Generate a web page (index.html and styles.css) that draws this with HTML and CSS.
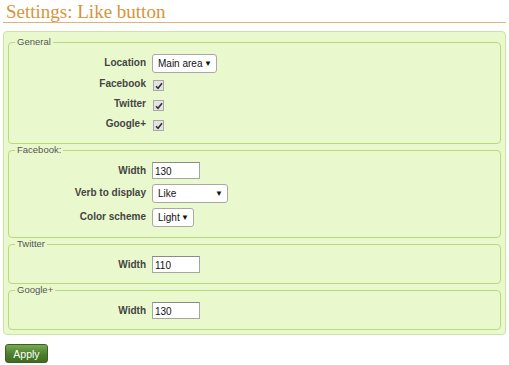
FILE: index.html
```html
<!DOCTYPE html>
<html lang="en">
  <head>
    <meta charset="UTF-8" />
    <title>Settings: Like button</title>
    <link rel="stylesheet" href="styles.css">
  </head>
  <body>
    <h1 class="page-title">Settings: Like button</h1>

    <form class="settings-box">
      <fieldset>
        <legend>General</legend>
        <div class="rows">
          <label>Location</label>
          <span class="select w-location"><span>Main area</span><span class="arrow">&#9660;</span></span>

          <label class="check-label">Facebook</label>
          <span class="check"><svg width="8" height="8" viewBox="0 0 8 8"><path d="M1 4.2 L3 6.3 L7 1.3" fill="none" stroke="#333" stroke-width="1.6"/></svg></span>

          <label class="check-label">Twitter</label>
          <span class="check"><svg width="8" height="8" viewBox="0 0 8 8"><path d="M1 4.2 L3 6.3 L7 1.3" fill="none" stroke="#333" stroke-width="1.6"/></svg></span>

          <label class="check-label">Google+</label>
          <span class="check"><svg width="8" height="8" viewBox="0 0 8 8"><path d="M1 4.2 L3 6.3 L7 1.3" fill="none" stroke="#333" stroke-width="1.6"/></svg></span>
        </div>
      </fieldset>

      <fieldset>
        <legend>Facebook:</legend>
        <div class="rows rows-wide">
          <label>Width</label>
          <input type="text" value="130" />

          <label>Verb to display</label>
          <span class="select w-verb"><span>Like</span><span class="arrow">&#9660;</span></span>

          <label>Color scheme</label>
          <span class="select w-scheme"><span>Light</span><span class="arrow">&#9660;</span></span>
        </div>
      </fieldset>

      <fieldset>
        <legend>Twitter</legend>
        <div class="rows">
          <label>Width</label>
          <input type="text" value="110" />
        </div>
      </fieldset>

      <fieldset>
        <legend>Google+</legend>
        <div class="rows">
          <label>Width</label>
          <input type="text" value="130" />
        </div>
      </fieldset>
    </form>

    <button class="apply-btn" type="button">Apply</button>
  </body>
</html>
```

FILE: styles.css
```css
body {
  margin: 0;
  padding: 0 3px;
  font-family: "Liberation Sans", Arial, sans-serif;
  background: #ffffff;
  color: #444;
}

.page-title {
  margin: 0;
  padding: 1px 0 0 3px;
  font-family: "Liberation Serif", "Times New Roman", serif;
  font-weight: normal;
  font-size: 19px;
  line-height: 21px;
  height: 21px;
  color: #d6943a;
  border-bottom: 1px solid #e0b274;
}

.settings-box {
  margin-top: 8px;
  padding: 4px;
  background: #eaf9cd;
  border: 1px solid #cbe4a4;
  border-radius: 4px;
}

fieldset {
  margin: 0;
  padding: 6px 6px 10px;
  border: 1px solid #b7da7e;
  border-radius: 4px;
}

legend {
  padding: 0 2px;
  font-size: 9.5px;
  line-height: 12px;
  color: #555;
}

.rows {
  display: grid;
  grid-template-columns: 131px auto;
  column-gap: 6px;
  row-gap: 4px;
  justify-items: start;
}

.rows-wide {
  row-gap: 5px;
}

.rows label {
  justify-self: end;
  padding-top: 3px;
  font-size: 10px;
  font-weight: bold;
  color: #444;
}

.rows .check-label {
  padding-top: 1px;
}

.check {
  display: flex;
  align-items: center;
  justify-content: center;
  width: 9px;
  height: 9px;
  margin: 3px 0 2px 1px;
  background: #e4e4e4;
  border: 1px solid #a9a9a9;
}

input[type="text"] {
  width: 48px;
  height: 17px;
  box-sizing: border-box;
  margin: 0;
  padding: 1px 2px 0;
  border: 1px solid #a5a5a5;
  border-top-color: #8a8a8a;
  background: white;
  font-family: "Liberation Sans", Arial, sans-serif;
  font-size: 10px;
  color: #111;
}

.select {
  display: flex;
  align-items: center;
  justify-content: space-between;
  box-sizing: border-box;
  height: 19px;
  padding: 0 4px 0 5px;
  background: white;
  border: 1px solid #a8a8a8;
  border-radius: 3px;
  font-size: 10px;
  white-space: nowrap;
  color: #111;
}

.select .arrow {
  font-size: 8px;
  color: #111;
}

.w-location {
  width: 65px;
}

.w-verb {
  width: 76px;
}

.w-scheme {
  width: 42px;
}

.apply-btn {
  margin: 9px 0 0 2px;
  width: 43px;
  height: 19px;
  padding: 0;
  border: 1px solid #3a5f22;
  border-radius: 3px;
  background: linear-gradient(#78a852, #4c7e2c 55%, #3f6c22);
  color: white;
  font-family: "Liberation Sans", Arial, sans-serif;
  font-size: 10.5px;
}
```
